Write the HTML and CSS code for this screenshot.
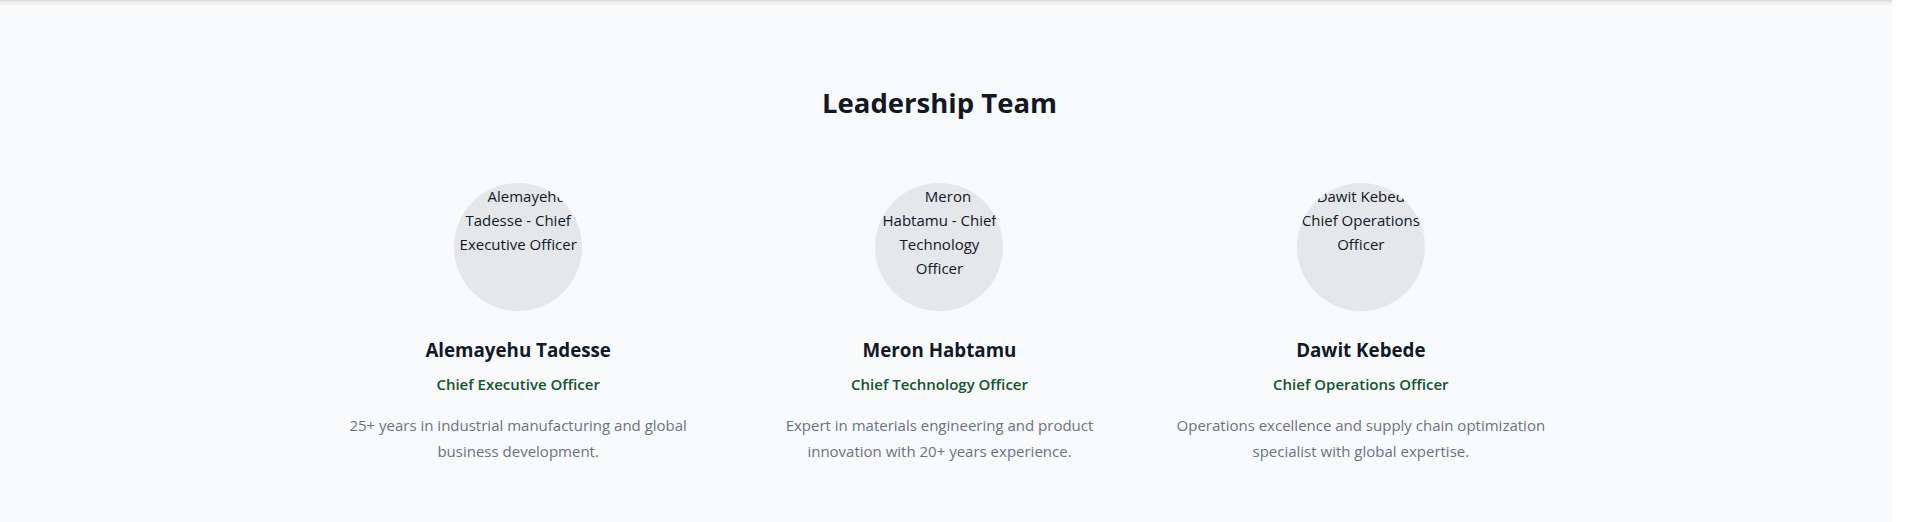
FILE: index.html
```html
<!DOCTYPE html>
<html lang="en">
<head>
<meta charset="utf-8">
<title>Leadership Team</title>
<link rel="stylesheet" href="styles.css">
</head>
<body>
<div class="page">
  <div class="top-shadow"></div>
  <section class="team">
    <div class="container">
      <h2 class="team-title">Leadership Team</h2>
      <div class="team-grid">
        <article class="member">
          <div class="avatar" role="img" aria-label="Alemayehu Tadesse - Chief Executive Officer">
            <span class="avatar-line avatar-line-first">Alemayehu</span>
            <span class="avatar-line">Tadesse - Chief</span>
            <span class="avatar-line">Executive Officer</span>
          </div>
          <h3 class="member-name">Alemayehu Tadesse</h3>
          <p class="member-role">Chief Executive Officer</p>
          <p class="member-bio">25+ years in industrial manufacturing and global business development.</p>
        </article>
        <article class="member">
          <div class="avatar" role="img" aria-label="Meron Habtamu - Chief Technology Officer">
            <span class="avatar-line avatar-line-first">Meron</span>
            <span class="avatar-line">Habtamu - Chief</span>
            <span class="avatar-line">Technology</span>
            <span class="avatar-line">Officer</span>
          </div>
          <h3 class="member-name">Meron Habtamu</h3>
          <p class="member-role">Chief Technology Officer</p>
          <p class="member-bio">Expert in materials engineering and product innovation with 20+ years experience.</p>
        </article>
        <article class="member">
          <div class="avatar" role="img" aria-label="Dawit Kebede - Chief Operations Officer">
            <span class="avatar-line avatar-line-first">Dawit Kebede -</span>
            <span class="avatar-line">Chief Operations</span>
            <span class="avatar-line">Officer</span>
          </div>
          <h3 class="member-name">Dawit Kebede</h3>
          <p class="member-role">Chief Operations Officer</p>
          <p class="member-bio">Operations excellence and supply chain optimization specialist with global expertise.</p>
        </article>
      </div>
    </div>
  </section>
</div>
</body>
</html>
```

FILE: styles.css
```css
* {
  box-sizing: border-box;
}

body {
  margin: 0;
  background: #ffffff;
  font-family: "Open Sans", "Noto Sans", sans-serif;
  color: #111827;
}

.page {
  width: calc(100% - 13px);
  min-height: 100vh;
  background: #f9fafb;
}

.top-shadow {
  height: 6px;
  background: linear-gradient(to bottom, #d9d9d9 0%, #ececec 35%, #f9fafb 100%);
}

.team {
  padding: 79px 13px 64px 0;
}

.container {
  max-width: 1280px;
  margin: 0 auto;
  padding: 0 32px;
}

.team-title {
  margin: 0 0 62px;
  font-size: 27.5px;
  line-height: 36px;
  font-weight: 700;
  text-align: center;
  color: #111827;
}

.team-grid {
  display: grid;
  grid-template-columns: repeat(3, 1fr);
  gap: 48px;
}

.member {
  text-align: center;
}

.avatar {
  width: 128px;
  height: 128px;
  margin: 0 auto 25px;
  border-radius: 50%;
  overflow: hidden;
  background: #e5e7eb;
  display: flex;
  flex-direction: column;
  align-items: center;
  padding-top: 1px;
  font-size: 15px;
  line-height: 24px;
  color: #111827;
}

.avatar-line {
  white-space: nowrap;
}

.avatar-line-first {
  margin-left: 17px;
}

.member-name {
  margin: 0 0 8px;
  font-size: 18.75px;
  line-height: 28px;
  font-weight: 700;
  color: #111827;
}

.member-role {
  margin: 0 0 16px;
  font-size: 15px;
  line-height: 24px;
  font-weight: 600;
  color: #14532d;
}

.member-bio {
  margin: 0;
  font-size: 15px;
  line-height: 26px;
  color: #6b7280;
}
```
